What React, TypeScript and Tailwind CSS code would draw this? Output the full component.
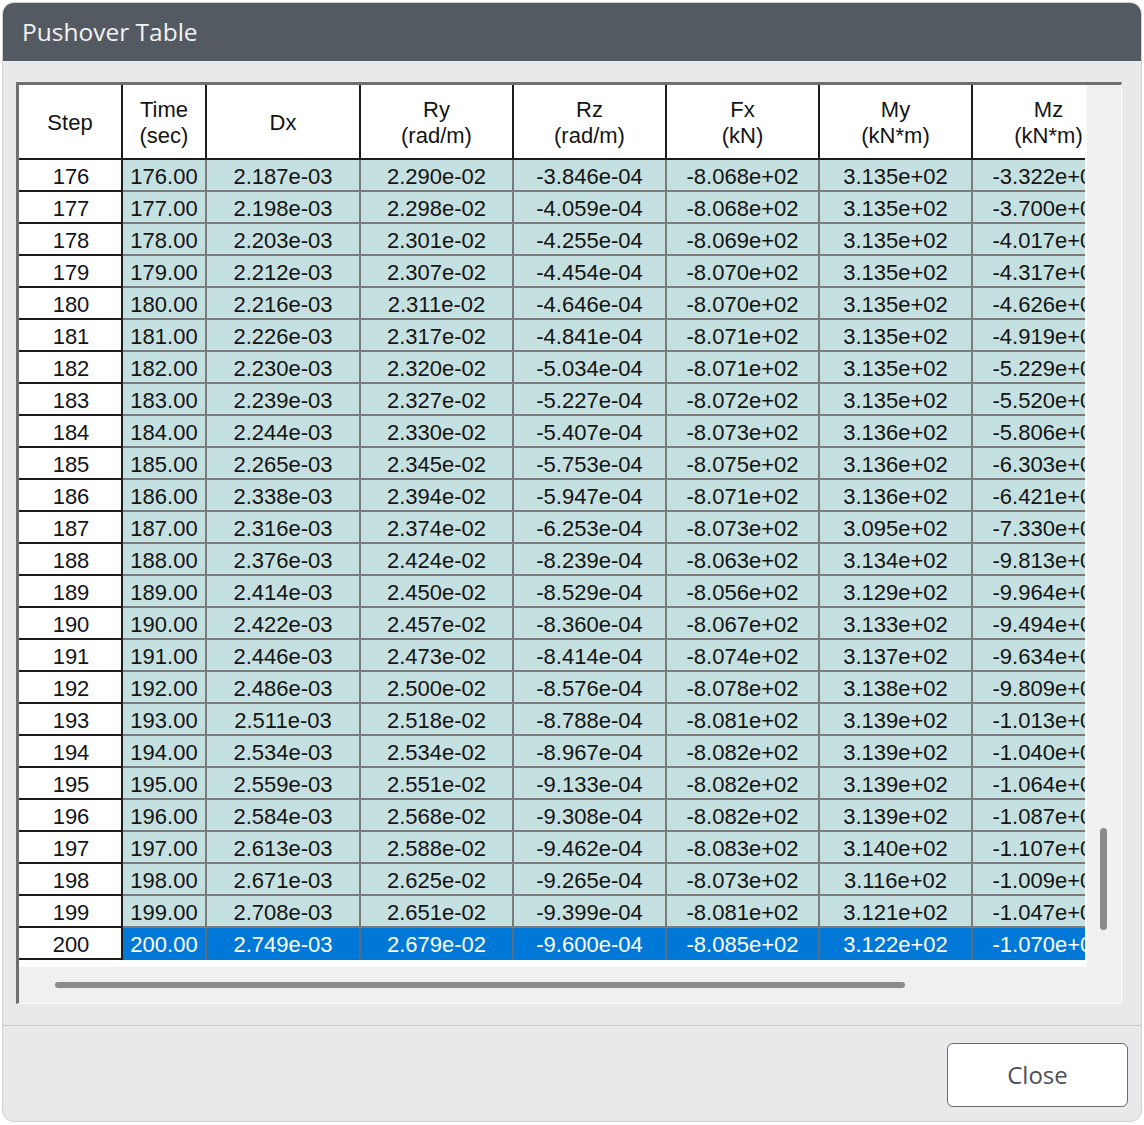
import React from "react"

// row data: step, time, Dx, Ry, Rz, Fx, My, Mz
const rows: string[][] = [
  ["176", "176.00", "2.187e-03", "2.290e-02", "-3.846e-04", "-8.068e+02", "3.135e+02", "-3.322e+01"],
  ["177", "177.00", "2.198e-03", "2.298e-02", "-4.059e-04", "-8.068e+02", "3.135e+02", "-3.700e+01"],
  ["178", "178.00", "2.203e-03", "2.301e-02", "-4.255e-04", "-8.069e+02", "3.135e+02", "-4.017e+01"],
  ["179", "179.00", "2.212e-03", "2.307e-02", "-4.454e-04", "-8.070e+02", "3.135e+02", "-4.317e+01"],
  ["180", "180.00", "2.216e-03", "2.311e-02", "-4.646e-04", "-8.070e+02", "3.135e+02", "-4.626e+01"],
  ["181", "181.00", "2.226e-03", "2.317e-02", "-4.841e-04", "-8.071e+02", "3.135e+02", "-4.919e+01"],
  ["182", "182.00", "2.230e-03", "2.320e-02", "-5.034e-04", "-8.071e+02", "3.135e+02", "-5.229e+01"],
  ["183", "183.00", "2.239e-03", "2.327e-02", "-5.227e-04", "-8.072e+02", "3.135e+02", "-5.520e+01"],
  ["184", "184.00", "2.244e-03", "2.330e-02", "-5.407e-04", "-8.073e+02", "3.136e+02", "-5.806e+01"],
  ["185", "185.00", "2.265e-03", "2.345e-02", "-5.753e-04", "-8.075e+02", "3.136e+02", "-6.303e+01"],
  ["186", "186.00", "2.338e-03", "2.394e-02", "-5.947e-04", "-8.071e+02", "3.136e+02", "-6.421e+01"],
  ["187", "187.00", "2.316e-03", "2.374e-02", "-6.253e-04", "-8.073e+02", "3.095e+02", "-7.330e+01"],
  ["188", "188.00", "2.376e-03", "2.424e-02", "-8.239e-04", "-8.063e+02", "3.134e+02", "-9.813e+01"],
  ["189", "189.00", "2.414e-03", "2.450e-02", "-8.529e-04", "-8.056e+02", "3.129e+02", "-9.964e+01"],
  ["190", "190.00", "2.422e-03", "2.457e-02", "-8.360e-04", "-8.067e+02", "3.133e+02", "-9.494e+01"],
  ["191", "191.00", "2.446e-03", "2.473e-02", "-8.414e-04", "-8.074e+02", "3.137e+02", "-9.634e+01"],
  ["192", "192.00", "2.486e-03", "2.500e-02", "-8.576e-04", "-8.078e+02", "3.138e+02", "-9.809e+01"],
  ["193", "193.00", "2.511e-03", "2.518e-02", "-8.788e-04", "-8.081e+02", "3.139e+02", "-1.013e+02"],
  ["194", "194.00", "2.534e-03", "2.534e-02", "-8.967e-04", "-8.082e+02", "3.139e+02", "-1.040e+02"],
  ["195", "195.00", "2.559e-03", "2.551e-02", "-9.133e-04", "-8.082e+02", "3.139e+02", "-1.064e+02"],
  ["196", "196.00", "2.584e-03", "2.568e-02", "-9.308e-04", "-8.082e+02", "3.139e+02", "-1.087e+02"],
  ["197", "197.00", "2.613e-03", "2.588e-02", "-9.462e-04", "-8.083e+02", "3.140e+02", "-1.107e+02"],
  ["198", "198.00", "2.671e-03", "2.625e-02", "-9.265e-04", "-8.073e+02", "3.116e+02", "-1.009e+02"],
  ["199", "199.00", "2.708e-03", "2.651e-02", "-9.399e-04", "-8.081e+02", "3.121e+02", "-1.047e+02"],
  ["200", "200.00", "2.749e-03", "2.679e-02", "-9.600e-04", "-8.085e+02", "3.122e+02", "-1.070e+02"],
]

const headers: [string, string?][] = [
  ["Step"],
  ["Time", "(sec)"],
  ["Dx"],
  ["Ry", "(rad/m)"],
  ["Rz", "(rad/m)"],
  ["Fx", "(kN)"],
  ["My", "(kN*m)"],
  ["Mz", "(kN*m)"],
]

const widths = [
  "w-[104px]",
  "w-[84px]",
  "w-[154px]",
  "w-[153px]",
  "w-[153px]",
  "w-[153px]",
  "w-[153px]",
  "w-[153px]",
]

export default function App() {
  return (
    <div className="w-[1144px] h-[1125px] bg-white pl-[2px] pt-[2px]">
      <div className="w-[1140px] h-[1120px] flex flex-col bg-[#e9e9ec] border border-[#cfd0d3] rounded-[12px] overflow-hidden">
        {/* title bar */}
        <div className="h-[58px] shrink-0 bg-[#545a62] flex items-center pl-[19px] text-[24.5px] text-[#f2f2f2] font-['Open_Sans',sans-serif]">
          Pushover Table
        </div>

        {/* table frame */}
        <div className="ml-[13px] mt-[21px] w-[1106px] h-[922px] flex flex-col bg-[#f0f0f0] border-l-[3px] border-t-[3px] border-[#6f6f6f] border-r border-b border-r-[#fbfbfb] border-b-[#fbfbfb] font-['Liberation_Sans',Arial,sans-serif] text-[22px] text-[#141414]">
          <div className="flex h-[882px]">
            <div className="w-[1068px] h-full bg-white pr-[2px] overflow-hidden">
              <div className="w-[1066px] overflow-hidden">
                <div className="flex w-max">
                  {headers.map(([a, b], i) => (
                    <div
                      key={i}
                      className={`${widths[i]} h-[75px] shrink-0 flex flex-col items-center justify-center pt-[2px] leading-[26px] bg-white border-r-2 border-b-2 border-[#1c1c1c]`}
                    >
                      <span>{a}</span>
                      {b && <span>{b}</span>}
                    </div>
                  ))}
                </div>
                {rows.map((r, ri) => {
                  const sel = ri === rows.length - 1
                  return (
                    <div key={ri} className="flex w-max">
                      {r.map((v, ci) =>
                        ci === 0 ? (
                          <div
                            key={ci}
                            className={`${widths[ci]} h-[32px] shrink-0 flex items-center justify-center pt-[3px] pl-[2px] bg-white border-r-2 border-b-2 border-[#1c1c1c]`}
                          >
                            {v}
                          </div>
                        ) : (
                          <div
                            key={ci}
                            className={`${widths[ci]} h-[32px] shrink-0 flex items-center justify-center pt-[3px] whitespace-nowrap border-r-2 border-b-2 ${
                              sel
                                ? "bg-[#0078d7] text-white border-r-[#5a6e80] border-b-[#0078d7]"
                                : "bg-[#c5e0e0] border-[#7c7c7c]"
                            }`}
                          >
                            {v}
                          </div>
                        )
                      )}
                    </div>
                  )
                })}
              </div>
            </div>
            {/* vertical scrollbar */}
            <div className="flex-1 pt-[743px] pl-[13px]">
              <div className="w-[7px] h-[102px] rounded-full bg-[#8a8a8a]" />
            </div>
          </div>
          {/* horizontal scrollbar */}
          <div className="flex-1 pt-[15px] pl-[36px]">
            <div className="w-[850px] h-[6px] rounded-full bg-[#8a8a8a]" />
          </div>
        </div>

        <div className="mt-[21px] h-px bg-[#c9cacd]" />

        <div className="flex justify-end pr-[13px] pt-[17px]">
          <button className="w-[181px] h-[64px] bg-white border border-[#6b6b6b] rounded-[6px] text-[24px] text-[#4d4f57] font-['Open_Sans',sans-serif]">
            Close
          </button>
        </div>
      </div>
    </div>
  )
}
